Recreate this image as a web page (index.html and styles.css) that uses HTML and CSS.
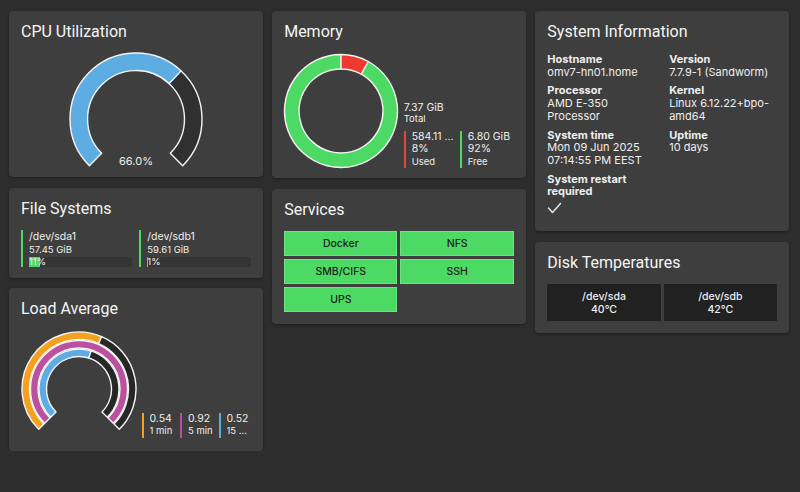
FILE: index.html
```html
<!DOCTYPE html>
<html lang="en">
<head>
<meta charset="utf-8">
<title>Dashboard</title>
<link rel="stylesheet" href="styles.css">
</head>
<body>
<div class="dashboard">
  <div class="col">
    <section class="card cpu">
      <h2 class="card-title">CPU Utilization</h2>
      <div class="cpu-body">
        <svg class="cpu-gauge" width="140" height="120" viewBox="0 0 140 120">
          <path class="seg" fill="#5eade2" d="M23.33 116.67 A66 66 0 0 1 115.18 21.89 L103.20 34.64 A48.5 48.5 0 0 0 35.71 104.29 Z"/>
          <path class="seg" fill="#303030" d="M115.18 21.89 A66 66 0 0 1 116.67 116.67 L104.29 104.29 A48.5 48.5 0 0 0 103.20 34.64 Z"/>
          <text class="gauge-label" x="70" y="116" text-anchor="middle">66.0%</text>
        </svg>
      </div>
    </section>

    <section class="card fs">
      <h2 class="card-title">File Systems</h2>
      <div class="fs-grid">
        <div class="fs-item">
          <div class="fs-name">/dev/sda1</div>
          <div class="fs-size">57.45 GiB</div>
          <div class="fs-track">
            <div class="fs-fill" style="width:11%"></div>
            <span class="fs-pct">11%</span>
          </div>
        </div>
        <div class="fs-item">
          <div class="fs-name">/dev/sdb1</div>
          <div class="fs-size">59.61 GiB</div>
          <div class="fs-track">
            <div class="fs-fill" style="width:1%"></div>
            <span class="fs-pct">1%</span>
          </div>
        </div>
      </div>
    </section>

    <section class="card load">
      <h2 class="card-title">Load Average</h2>
      <div class="load-body">
        <svg class="load-gauge" width="118" height="102" viewBox="0 0 118 102">
          <path class="seg" fill="#f4a11e" d="M18.70 99.31 A57 57 0 0 1 81.64 6.69 L78.66 13.57 A49.5 49.5 0 0 0 24.00 94.00 Z"/>
          <path class="seg" fill="#272727" d="M81.64 6.69 A57 57 0 0 1 99.31 99.31 L94.00 94.00 A49.5 49.5 0 0 0 78.66 13.57 Z"/>
          <path class="seg" fill="#bb519d" d="M24.71 93.29 A48.5 48.5 0 1 1 93.29 93.29 L87.99 87.99 A41 41 0 1 0 30.01 87.99 Z"/>
          <path class="seg" fill="#5eade2" d="M30.72 87.28 A40 40 0 0 1 71.09 20.87 L68.83 28.02 A32.5 32.5 0 0 0 36.02 81.98 Z"/>
          <path class="seg" fill="#272727" d="M71.09 20.87 A40 40 0 0 1 87.28 87.28 L81.98 81.98 A32.5 32.5 0 0 0 68.83 28.02 Z"/>
        </svg>
        <div class="load-legend">
          <div class="legend-col orange">
            <div class="legend-value">0.54</div>
            <div class="legend-label">1 min</div>
          </div>
          <div class="legend-col magenta">
            <div class="legend-value">0.92</div>
            <div class="legend-label">5 min</div>
          </div>
          <div class="legend-col blue">
            <div class="legend-value">0.52</div>
            <div class="legend-label">15 min</div>
          </div>
        </div>
      </div>
    </section>
  </div>

  <div class="col">
    <section class="card mem">
      <h2 class="card-title">Memory</h2>
      <div class="mem-body">
        <svg class="mem-donut" width="118" height="118" viewBox="0 0 118 118">
          <path class="seg" fill="#4cd964" d="M86.22 9.49 A56.5 56.5 0 1 1 59 2.5 L59 17 A42 42 0 1 0 79.23 22.19 Z"/>
          <path class="seg" fill="#f0392e" d="M59 2.5 A56.5 56.5 0 0 1 86.22 9.49 L79.23 22.19 A42 42 0 0 0 59 17 Z"/>
        </svg>
        <div class="mem-legend">
          <div class="mem-total">
            <div class="legend-value">7.37 GiB</div>
            <div class="legend-label">Total</div>
          </div>
          <div class="mem-split">
            <div class="legend-col red mem-col">
              <div class="legend-value">584.11 MiB</div>
              <div class="legend-value">8%</div>
              <div class="legend-label">Used</div>
            </div>
            <div class="legend-col green mem-col">
              <div class="legend-value">6.80 GiB</div>
              <div class="legend-value">92%</div>
              <div class="legend-label">Free</div>
            </div>
          </div>
        </div>
      </div>
    </section>

    <section class="card services">
      <h2 class="card-title">Services</h2>
      <div class="svc-grid">
        <div class="svc">Docker</div>
        <div class="svc">NFS</div>
        <div class="svc">SMB/CIFS</div>
        <div class="svc">SSH</div>
        <div class="svc">UPS</div>
      </div>
    </section>
  </div>

  <div class="col">
    <section class="card sysinfo">
      <h2 class="card-title">System Information</h2>
      <div class="info-grid">
        <div class="info-item">
          <div class="info-label">Hostname</div>
          <div class="info-value">omv7-hn01.home</div>
        </div>
        <div class="info-item">
          <div class="info-label">Version</div>
          <div class="info-value">7.7.9-1 (Sandworm)</div>
        </div>
        <div class="info-item">
          <div class="info-label">Processor</div>
          <div class="info-value">AMD E-350 Processor</div>
        </div>
        <div class="info-item">
          <div class="info-label">Kernel</div>
          <div class="info-value">Linux 6.12.22+bpo-amd64</div>
        </div>
        <div class="info-item">
          <div class="info-label">System time</div>
          <div class="info-value">Mon 09 Jun 2025 07:14:55 PM EEST</div>
        </div>
        <div class="info-item">
          <div class="info-label">Uptime</div>
          <div class="info-value">10 days</div>
        </div>
        <div class="info-item">
          <div class="info-label">System restart required</div>
          <svg class="check" width="15" height="12" viewBox="0 0 15 12">
            <polyline points="1.5,6 5.5,10.5 13.5,1.5" fill="none" stroke="#ececec" stroke-width="1.4" stroke-linecap="round" stroke-linejoin="round"/>
          </svg>
        </div>
      </div>
    </section>

    <section class="card temps">
      <h2 class="card-title">Disk Temperatures</h2>
      <div class="temp-grid">
        <div class="temp-tile">
          <div>/dev/sda</div>
          <div>40°C</div>
        </div>
        <div class="temp-tile">
          <div>/dev/sdb</div>
          <div>42°C</div>
        </div>
      </div>
    </section>
  </div>
</div>
</body>
</html>
```

FILE: styles.css
```css
html, body {
  margin: 0;
  background: #2d2d2d;
}

body {
  font-family: Inter, Roboto, "Liberation Sans", Arial, sans-serif;
  color: #eeeeee;
  font-size: 11px;
}

.dashboard {
  display: grid;
  grid-template-columns: repeat(3, minmax(0, 1fr));
  column-gap: 9.5px;
  padding: 11px 11px 0 9px;
  align-items: start;
}

.col {
  display: flex;
  flex-direction: column;
  gap: 10.5px;
  min-width: 0;
}

.card {
  background: #3e3e3e;
  border-radius: 4px;
  padding: 12px;
  box-shadow: 0 1px 3px rgba(0, 0, 0, 0.35);
}

.card-title {
  margin: 0 0 12px;
  font-family: Roboto, "Liberation Sans", Arial, sans-serif;
  font-size: 16px;
  font-weight: 400;
  line-height: 18px;
  color: #f5f5f5;
}

.seg {
  stroke: #f4f4f4;
  stroke-width: 1.4;
  stroke-linejoin: round;
}

/* CPU */
.cpu {
  padding-bottom: 8px;
}

.cpu-body {
  display: flex;
  justify-content: center;
  margin-top: -4px;
}

.cpu-gauge {
  display: block;
}

.gauge-label {
  font-family: Inter, Roboto, "Liberation Sans", Arial, sans-serif;
  font-size: 11px;
  fill: #eeeeee;
}

/* Memory */
.mem {
  padding-bottom: 8.5px;
}

.mem-body {
  display: flex;
  align-items: flex-end;
  margin-top: -1.5px;
}

.mem-donut {
  display: block;
  margin-left: -2.5px;
  flex: none;
}

.mem-legend {
  margin-left: 4px;
  margin-bottom: 1.5px;
  min-width: 0;
}

.mem-total {
  line-height: 11.5px;
  margin-bottom: 6px;
}

.mem-split {
  display: flex;
  gap: 2px;
}

.mem-col {
  width: 56px;
}

.legend-col {
  box-sizing: border-box;
  border-left: 2px solid #888;
  padding-left: 6px;
  line-height: 12.5px;
  min-width: 0;
}

.legend-value,
.legend-label {
  white-space: nowrap;
  overflow: hidden;
  text-overflow: ellipsis;
}

.legend-value {
  font-size: 10.5px;
}

.legend-label {
  font-size: 9.5px;
}

.red { border-left-color: #e8453a; }
.green { border-left-color: #4cd964; }
.orange { border-left-color: #f4a11e; }
.magenta { border-left-color: #bb519d; }
.blue { border-left-color: #5eade2; }

/* File systems */
.fs {
  padding-bottom: 11px;
}

.fs-grid {
  display: grid;
  grid-template-columns: 1fr 1fr;
  column-gap: 7px;
}

.fs-item {
  border-left: 2px solid #4cd964;
  padding-left: 6px;
}

.fs-name {
  font-size: 10.5px;
  line-height: 13px;
}

.fs-size {
  font-size: 9.5px;
  line-height: 13px;
}

.fs-track {
  position: relative;
  height: 10px;
  margin-top: 1px;
  background: #353535;
}

.fs-fill {
  position: absolute;
  left: 0;
  top: 0;
  bottom: 0;
  background: #4cd964;
}

.fs-pct {
  position: relative;
  display: block;
  font-size: 9.5px;
  line-height: 10px;
  color: #f2f2f2;
}

/* Load average */
.load {
  padding-bottom: 13px;
}

.load-body {
  display: flex;
  align-items: flex-end;
  margin-top: 5.5px;
}

.load-gauge {
  display: block;
  flex: none;
  margin-left: -1.5px;
  margin-bottom: 5.5px;
}

.load-legend {
  display: flex;
  gap: 3px;
  margin-left: 4px;
}

.load-legend .legend-col {
  width: 35.5px;
}

/* Services */
.svc-grid {
  display: grid;
  grid-template-columns: 1fr 1fr;
  gap: 3px;
}

.svc {
  height: 25px;
  box-sizing: border-box;
  border: 1px solid #6fe287;
  background: #4cd964;
  color: #1d1d1d;
  font-size: 10.5px;
  font-weight: 500;
  display: flex;
  align-items: center;
  justify-content: center;
}

/* System information */
.sysinfo {
  padding-bottom: 17px;
}

.info-grid {
  display: grid;
  grid-template-columns: 1fr 1fr;
  column-gap: 14px;
  row-gap: 6px;
  margin-top: 1.5px;
  font-size: 11px;
  line-height: 12.7px;
}

.info-label {
  font-weight: 700;
}

.check {
  display: block;
  margin-top: 4px;
}

/* Disk temperatures */
.temp-grid {
  display: grid;
  grid-template-columns: 1fr 1fr;
  gap: 3px;
}

.temp-tile {
  background: #212121;
  text-align: center;
  font-size: 10.5px;
  line-height: 13px;
  padding: 6px 0 5px;
  font-weight: 500;
}
```
